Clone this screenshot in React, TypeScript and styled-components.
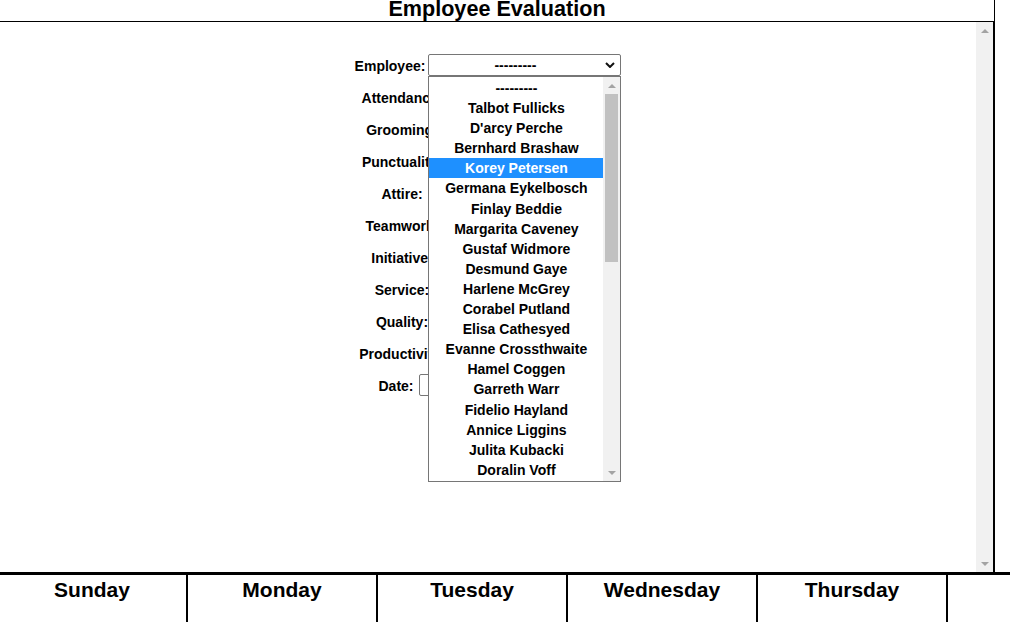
import styled, { createGlobalStyle } from "styled-components";

const GlobalStyle = createGlobalStyle`
  html, body {
    margin: 0;
    padding: 0;
    background: #fff;
    overflow: hidden;
  }
  body {
    font-family: "Liberation Sans", Arial, sans-serif;
    color: #000;
  }
`;

const employees = [
  "---------",
  "Talbot Fullicks",
  "D'arcy Perche",
  "Bernhard Brashaw",
  "Korey Petersen",
  "Germana Eykelbosch",
  "Finlay Beddie",
  "Margarita Caveney",
  "Gustaf Widmore",
  "Desmund Gaye",
  "Harlene McGrey",
  "Corabel Putland",
  "Elisa Cathesyed",
  "Evanne Crossthwaite",
  "Hamel Coggen",
  "Garreth Warr",
  "Fidelio Hayland",
  "Annice Liggins",
  "Julita Kubacki",
  "Doralin Voff",
  "Ulick Brando",
];

const ratingFields = [
  "Attendance",
  "Grooming",
  "Punctuality",
  "Attire",
  "Teamwork",
  "Initiative",
  "Service",
  "Quality",
  "Productivity",
];

const days = ["Sunday", "Monday", "Tuesday", "Wednesday", "Thursday", "Friday", "Saturday"];

export default function App() {
  const active = "Korey Petersen";

  return (
    <>
      <GlobalStyle />
      <Page>
        <Header>
          <Title>Employee Evaluation</Title>
        </Header>

        <Viewport>
          <Content>
            <Form>
              <Row>
                <Label>Employee:</Label>
                <SelectWrap>
                  <SelectBox>
                    <SelectText>---------</SelectText>
                    <Chevron width="10" height="6" viewBox="0 0 10 6">
                      <path d="M1 1 L5 5 L9 1" fill="none" stroke="#111" strokeWidth="2" />
                    </Chevron>
                  </SelectBox>

                  <Popup>
                    <OptionList>
                      {employees.map((name) => (
                        <Option key={name} $active={name === active}>
                          {name}
                        </Option>
                      ))}
                    </OptionList>
                    <PopupScroll>
                      <ArrowBox>
                        <ArrowUp />
                      </ArrowBox>
                      <Thumb />
                      <Spacer />
                      <ArrowBox>
                        <ArrowDown />
                      </ArrowBox>
                    </PopupScroll>
                  </Popup>
                </SelectWrap>
              </Row>

              {ratingFields.map((field) => (
                <Row key={field} $gap={6}>
                  <Label>{field}:</Label>
                  <RatingSelect defaultValue="">
                    <option value="">---------</option>
                    <option value="1">1</option>
                    <option value="2">2</option>
                    <option value="3">3</option>
                    <option value="4">4</option>
                    <option value="5">5</option>
                  </RatingSelect>
                </Row>
              ))}

              <Row $gap={5}>
                <Label>Date:</Label>
                <DateInput type="date" />
              </Row>
            </Form>
          </Content>

          <PageScroll>
            <ArrowBox>
              <ArrowUp />
            </ArrowBox>
            <Spacer />
            <ArrowBox>
              <ArrowDown />
            </ArrowBox>
          </PageScroll>
        </Viewport>

        <WeekRow>
          {days.map((day) => (
            <DayCell key={day}>{day}</DayCell>
          ))}
        </WeekRow>
      </Page>
    </>
  );
}

const Page = styled.div`
  width: 1010px;
  height: 622px;
  display: flex;
  flex-direction: column;
  overflow: hidden;
`;

const Header = styled.header`
  width: 995px;
  height: 22px;
  box-sizing: border-box;
  border-right: 1px solid #000;
  border-bottom: 1px solid #000;
  padding-bottom: 4px;
  text-align: center;
`;

const Title = styled.h1`
  margin: 0;
  font-size: 21.6px;
  line-height: 17px;
  font-weight: 700;
`;

const Viewport = styled.div`
  width: 995px;
  height: 550px;
  box-sizing: border-box;
  border-right: 2px solid #000;
  display: flex;
  flex-shrink: 0;
`;

const Content = styled.main`
  flex: 1;
  background: #fff;
`;

const Form = styled.form`
  display: flex;
  flex-direction: column;
  gap: 10px;
  padding-top: 32px;
`;

const Row = styled.div<{ $gap?: number }>`
  display: flex;
  justify-content: center;
  align-items: center;
  gap: ${(p) => p.$gap ?? 3}px;
  height: 22px;
`;

const Label = styled.label`
  font-size: 14px;
  font-weight: 700;
  white-space: nowrap;
  padding-top: 2px;
`;

const SelectWrap = styled.div`
  position: relative;
  width: 193px;
  height: 22px;
`;

const SelectBox = styled.div`
  height: 22px;
  box-sizing: border-box;
  border: 1px solid #767676;
  border-radius: 2px;
  background: #fff;
  display: flex;
  align-items: center;
`;

const SelectText = styled.span`
  flex: 1;
  text-align: center;
  font-size: 14px;
  font-weight: 700;
`;

const Chevron = styled.svg`
  margin-right: 5px;
  margin-left: 4px;
`;

const Popup = styled.div`
  position: absolute;
  top: 22px;
  left: 0;
  z-index: 10;
  width: 193px;
  height: 406px;
  box-sizing: border-box;
  border: 1px solid #767676;
  background: #fff;
  display: flex;
`;

const OptionList = styled.ul`
  list-style: none;
  margin: 0;
  padding: 1px 0 0;
  flex: 1;
  overflow: hidden;
`;

const Option = styled.li<{ $active?: boolean }>`
  height: 20.1px;
  line-height: 20px;
  text-align: center;
  font-size: 14px;
  font-weight: 700;
  white-space: nowrap;
  color: ${(p) => (p.$active ? "#fff" : "#000")};
  background: ${(p) => (p.$active ? "#1e90ff" : "transparent")};
`;

const ScrollTrack = styled.div`
  width: 17px;
  background: #f1f1f1;
  display: flex;
  flex-direction: column;
  align-items: center;
  flex-shrink: 0;
`;

const PopupScroll = styled(ScrollTrack)``;

const PageScroll = styled(ScrollTrack)``;

const ArrowBox = styled.div`
  width: 17px;
  height: 17px;
  display: flex;
  align-items: center;
  justify-content: center;
`;

const ArrowUp = styled.span`
  width: 0;
  height: 0;
  border-left: 4px solid transparent;
  border-right: 4px solid transparent;
  border-bottom: 4px solid #a3a3a3;
`;

const ArrowDown = styled.span`
  width: 0;
  height: 0;
  border-left: 4px solid transparent;
  border-right: 4px solid transparent;
  border-top: 4px solid #a3a3a3;
`;

const Thumb = styled.div`
  width: 13px;
  height: 168px;
  background: #c1c1c1;
`;

const Spacer = styled.div`
  flex: 1;
`;

const RatingSelect = styled.select`
  width: 166px;
  height: 22px;
  font-family: "Liberation Sans", Arial, sans-serif;
  font-size: 14px;
`;

const DateInput = styled.input`
  width: 179px;
  height: 22px;
  box-sizing: border-box;
  border: 1px solid #767676;
  border-radius: 2px;
  padding-left: 12px;
  font-family: "Liberation Sans", Arial, sans-serif;
  font-size: 13px;
`;

const WeekRow = styled.div`
  display: flex;
  border-top: 3px solid #000;
  margin-left: -2px;
  flex: 1;
`;

const DayCell = styled.div`
  width: 190px;
  flex-shrink: 0;
  box-sizing: border-box;
  border-right: 2px solid #000;
  padding-top: 3px;
  text-align: center;
  font-size: 21px;
  font-weight: 700;
`;
